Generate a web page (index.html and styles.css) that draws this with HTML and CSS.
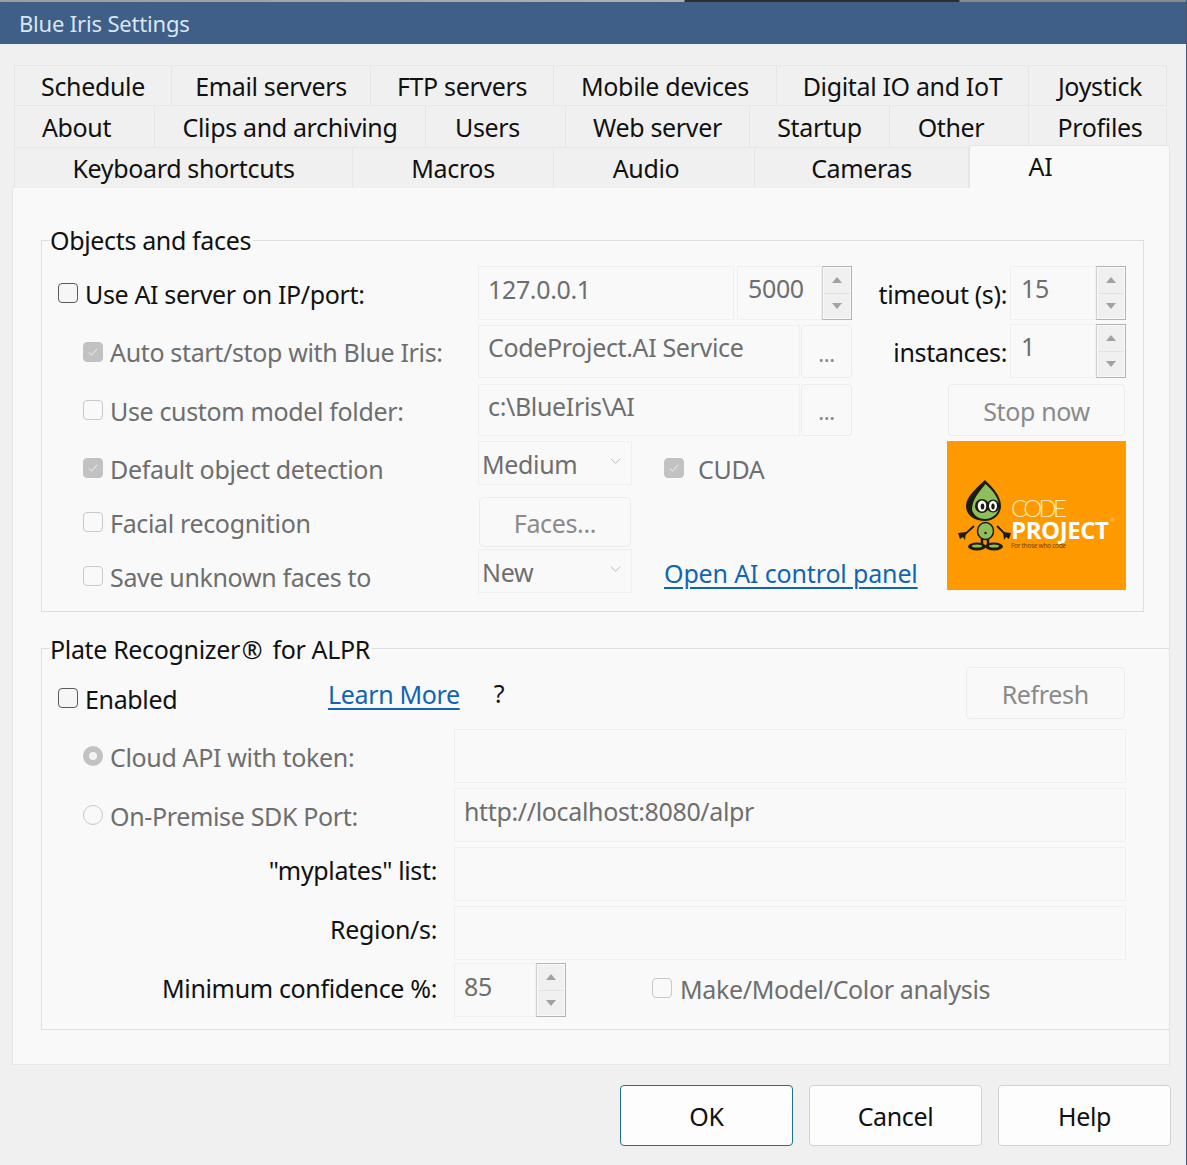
FILE: index.html
```html
<!DOCTYPE html>
<html lang="en">
<head>
<meta charset="utf-8">
<title>Blue Iris Settings</title>
<link rel="stylesheet" href="styles.css">
</head>
<body>
<div class="window">
  <div class="topedge"></div>
  <div class="titlebar">Blue Iris Settings</div>
  <div class="tabs">
    <div class="tabrow tr1">
      <div class="tab">Schedule</div><div class="tab">Email servers</div><div class="tab">FTP servers</div><div class="tab">Mobile devices</div><div class="tab">Digital IO and IoT</div><div class="tab nudge-r">Joystick</div>
    </div>
    <div class="tabrow tr2">
      <div class="tab nudge-l">About</div><div class="tab">Clips and archiving</div><div class="tab nudge-l">Users</div><div class="tab">Web server</div><div class="tab">Startup</div><div class="tab nudge-l">Other</div><div class="tab nudge-r">Profiles</div>
    </div>
    <div class="tabrow tr3">
      <div class="tab">Keyboard shortcuts</div><div class="tab">Macros</div><div class="tab nudge-l">Audio</div><div class="tab">Cameras</div><div class="tab active">AI</div>
    </div>
  </div>
  <div class="panel">
    <section class="group g1">
      <div class="legend">Objects and faces</div>
      <div class="row r1">
        <label class="lab w420"><span class="cb on"></span><span class="txt">Use AI server on IP/port:</span></label>
        <div class="input w256"><span>127.0.0.1</span></div>
        <div class="spin w115 ml3">
          <div class="input grow"><span>5000</span></div>
          <div class="arrows"><span class="up"><i></i></span><span class="down"><i></i></span></div>
        </div>
        <div class="rlabel w158">timeout (s):</div>
        <div class="spin w116">
          <div class="input grow"><span>15</span></div>
          <div class="arrows"><span class="up"><i></i></span><span class="down"><i></i></span></div>
        </div>
      </div>
      <div class="row r2">
        <label class="lab w420 sub dis"><span class="cb checked"><svg viewBox="0 0 20 20"><path d="M5.500 10.500l3 3 6-7"/></svg></span><span class="txt">Auto start/stop with Blue Iris:</span></label>
        <div class="input w322"><span>CodeProject.AI Service</span></div>
        <div class="btn dots w51">...</div>
        <div class="rlabel w158">instances:</div>
        <div class="spin w116">
          <div class="input grow"><span>1</span></div>
          <div class="arrows"><span class="up"><i></i></span><span class="down"><i></i></span></div>
        </div>
      </div>
      <div class="row r3">
        <label class="lab w420 sub dis"><span class="cb"></span><span class="txt">Use custom model folder:</span></label>
        <div class="input w322"><span>c:\BlueIris\AI</span></div>
        <div class="btn dots w51">...</div>
        <div class="btn stop">Stop now</div>
      </div>
      <div class="lower">
        <div class="lowercol">
          <div class="row r4">
            <label class="lab w420 sub dis nudge"><span class="cb checked"><svg viewBox="0 0 20 20"><path d="M5.500 10.500l3 3 6-7"/></svg></span><span class="txt">Default object detection</span></label>
            <div class="select"><span>Medium</span><svg viewBox="0 0 12 8"><path d="M1 1.500l5 5 5-5"/></svg></div>
            <label class="lab dis cuda nudge"><span class="cb checked"><svg viewBox="0 0 20 20"><path d="M5.500 10.500l3 3 6-7"/></svg></span><span class="txt">CUDA</span></label>
          </div>
          <div class="row r5">
            <label class="lab w420 sub dis"><span class="cb"></span><span class="txt">Facial recognition</span></label>
            <div class="btn faces">Faces...</div>
          </div>
          <div class="row r6">
            <label class="lab w420 sub dis nudge"><span class="cb"></span><span class="txt">Save unknown faces to</span></label>
            <div class="select"><span>New</span><svg viewBox="0 0 12 8"><path d="M1 1.500l5 5 5-5"/></svg></div>
            <a class="link openai">Open AI control panel</a>
          </div>
        </div>
        <svg class="logo" viewBox="0 0 179 149" role="img" aria-label="Code Project logo">
          <rect width="179" height="149" fill="#ff9900"/>
          <path d="M27 85L16 95M50 85L60 95" stroke="#1c1c10" stroke-width="1.800" fill="none"/>
          <path d="M11 92l8-1-1 8-2-3-3 2-1-3zM64 92l-8-1 1 8 2-3 3 2 1-3z" fill="#1c1c10"/>
          <path d="M35 96v9M41 96v9" stroke="#1c1c10" stroke-width="2.500"/>
          <ellipse cx="30" cy="105.500" rx="9" ry="4" fill="#1c1c10"/>
          <ellipse cx="47" cy="105.500" rx="9" ry="4" fill="#1c1c10"/>
          <ellipse cx="30" cy="105" rx="5" ry="1.500" fill="#8dbf5c"/>
          <ellipse cx="47" cy="105" rx="5" ry="1.500" fill="#8dbf5c"/>
          <ellipse cx="38.500" cy="90" rx="8" ry="8.500" fill="#8dbf5c" stroke="#1c1c10" stroke-width="1.500"/>
          <circle cx="38.500" cy="92" r="1.200" fill="#1c1c10"/>
          <path d="M38 39C31 46 19 55 19 65C19 74 27 80 38 80C47 80 54 73 54 65C54 54 44 45 38 39Z" fill="#1c1c10"/>
          <path d="M38.500 43C44 48 52 56 52 65C52 73 45 78 38 78C32 78 27 75 25 69C25 58 33 50 38.500 43Z" fill="#8dbf5c"/>
          <circle cx="35" cy="65" r="7" fill="#1c1c10"/>
          <circle cx="46" cy="65" r="6.500" fill="#1c1c10"/>
          <ellipse cx="35" cy="65" rx="4.300" ry="5.500" fill="#fff"/>
          <ellipse cx="46" cy="65" rx="4" ry="5.200" fill="#fff"/>
          <ellipse cx="35.500" cy="65.500" rx="1.800" ry="3" fill="#1c1c10"/>
          <ellipse cx="46" cy="65.500" rx="1.700" ry="2.900" fill="#1c1c10"/>
          <text class="lg-code" x="64" y="76" textLength="56">CODE</text>
          <text class="lg-project" x="64" y="98" textLength="98">PROJECT</text>
          <text class="lg-reg" x="163" y="81">®</text>
          <text class="lg-tag" x="64" y="107" textLength="55">For those who code</text>
        </svg>
      </div>
    </section>
    <section class="group g2">
      <div class="legend">Plate Recognizer<span class="reg">®</span> for ALPR</div>
      <div class="row r7">
        <label class="lab w270 nudge"><span class="cb on"></span><span class="txt">Enabled</span></label>
        <a class="link learn">Learn More</a>
        <span class="question">?</span>
        <div class="btn refresh">Refresh</div>
      </div>
      <div class="row rin first">
        <label class="lab w396 sub dis"><span class="rb checked"></span><span class="txt">Cloud API with token:</span></label>
        <div class="input w672"></div>
      </div>
      <div class="row rin">
        <label class="lab w396 sub dis"><span class="rb"></span><span class="txt">On-Premise SDK Port:</span></label>
        <div class="input w672"><span>http://localhost:8080/alpr</span></div>
      </div>
      <div class="row rin">
        <div class="rlabel w396 pr17">"myplates" list:</div>
        <div class="input w672"></div>
      </div>
      <div class="row rin">
        <div class="rlabel w396 pr17">Region/s:</div>
        <div class="input w672"></div>
      </div>
      <div class="row rin last">
        <div class="rlabel w396 pr17">Minimum confidence %:</div>
        <div class="spin w112">
          <div class="input grow"><span>85</span></div>
          <div class="arrows"><span class="up"><i></i></span><span class="down"><i></i></span></div>
        </div>
        <label class="lab dis make"><span class="cb"></span><span class="txt">Make/Model/Color analysis</span></label>
      </div>
    </section>
  </div>
  <div class="footer">
    <div class="okbtn primary">OK</div>
    <div class="okbtn">Cancel</div>
    <div class="okbtn">Help</div>
  </div>
</div>
</body>
</html>
```
FILE: styles.css
```css
* { box-sizing: border-box; }
html, body { margin: 0; padding: 0; }
body {
  width: 1187px;
  height: 1165px;
  overflow: hidden;
  background: #f0f0f0;
  font-family: "Noto Sans", "Open Sans", sans-serif;
  font-size: 25px;
  letter-spacing: -0.35px;
  color: #111;
}
.window {
  width: 1187px;
  height: 1165px;
  border-right: 1px solid #44597a;
  background: #f0f0f0;
}
.topedge {
  height: 2px;
  background: linear-gradient(90deg, #9c9c9c 0, #b0b0b0 684px, #2e2e2e 685px, #2e2e2e 959px, #8a8a8a 960px, #8a8a8a 100%);
}
.titlebar {
  height: 42px;
  background: #3f5f89;
  color: #dbe6f2;
  font-size: 22px;
  letter-spacing: -0.18px;
  line-height: 42px;
  padding-left: 19px;
}
.tabs { margin: 21px 0 0 14px; }
.tabrow { display: grid; }
.tr1 { grid-template-columns: 158px 199px 183px 223px 252px 138px; height: 40px; }
.tr2 { grid-template-columns: 141px 271px 140px 184px 140px 139px 138px; height: 42px; }
.tr3 { grid-template-columns: 339px 201px 201px 214px 201px; height: 40px; }
.tab {
  background: #f0f0f0;
  border: 1px solid #e6e6e6;
  border-left: 0;
  border-bottom: 0;
  display: flex;
  align-items: center;
  justify-content: center;
  padding-top: 1px;
}
.tr3 .tab { padding-top: 0; padding-bottom: 1px; }
.tab:first-child { border-left: 1px solid #e6e6e6; }
.tab.nudge-l { padding-right: 16px; }
.tab.nudge-r { padding-left: 5px; }
.tr3 .tab.active {
  background: #f9f9f9;
  margin-top: -2px;
  height: 43px;
  position: relative;
  z-index: 1;
  border-left: 1px solid #e6e6e6;
  padding-bottom: 3px;
  padding-right: 58px;
}
.panel {
  margin-left: 12px;
  width: 1158px;
  height: 878px;
  background: #f9f9f9;
  border: 1px solid #e6e6e6;
  padding: 52px 0 0 28px;
}
.group { border: 1px solid #dedede; }
.g1 { width: 1103px; height: 372px; }
.g2 { width: 1128px; height: 382px; margin-top: 36px; border-right: 0; }
.legend {
  background: #f9f9f9;
  width: max-content;
  margin: -16px 0 0 8px;
  padding: 0 2px 0 0;
  height: 30px;
  line-height: 30px;
}
.g2 .legend { line-height: 32px; }
.reg { margin: 0 4px 0 2px; }
.row { display: flex; align-items: center; padding-left: 16px; }
.r1 { height: 54px; margin-top: 11px; }
.r2 { height: 53px; margin-top: 5px; }
.r3 { height: 52px; margin-top: 6px; }
.r4 { height: 44px; }
.r5 { height: 50px; margin-top: 12px; }
.r6 { height: 44px; margin-top: 2px; }
.r7 { height: 52px; margin-top: 4px; }
.rin { height: 54px; margin-top: 5px; }
.rin.first { margin-top: 10px; }
.rin.last { margin-top: 3px; }
.lower { display: flex; margin-top: 5px; }
.lowercol { width: 905px; }
.logo { width: 179px; height: 149px; display: block; }
.lg-code { font-family: Lato, sans-serif; font-weight: 300; font-size: 24px; fill: #ffe9bd; letter-spacing: 0; }
.lg-project { font-family: "Open Sans", sans-serif; font-weight: 700; font-size: 24px; fill: #fff; letter-spacing: 0; }
.lg-reg { font-size: 6px; fill: #ffd48a; letter-spacing: 0; }
.lg-tag { font-family: "Noto Sans", sans-serif; font-size: 6.500px; fill: #6b4500; letter-spacing: 0; }

.lab { display: flex; align-items: center; flex: none; }
.lab .txt { white-space: nowrap; padding-top: 2px; }
.r2 .lab .txt { padding-top: 0; }
.sub { padding-left: 25px; }
.dis { color: #6e6e6e; }
.nudge { padding-top: 10px; }
.w420 { width: 420px; }
.w396 { width: 396px; }
.w270 { width: 270px; }
.w256 { width: 256px; }
.w322 { width: 322px; }
.w672 { width: 672px; }
.w115 { width: 115px; }
.w116 { width: 116px; }
.w112 { width: 112px; }
.w51 { width: 51px; margin-left: 1px; }
.w158 { width: 158px; }
.ml3 { margin-left: 3px; }
.cb, .rb {
  width: 20px;
  height: 20px;
  flex: none;
  margin-right: 7px;
  border: 1px solid #c9c9c9;
  border-radius: 4px;
  background: #f9f9f9;
  display: block;
}
.cb.on { border-color: #5a5a5a; background: #f6f6f6; }
.cb.checked { background: #c2c2c2; border-color: #c2c2c2; }
.cb svg { display: block; width: 18px; height: 18px; fill: none; stroke: #f4f4f4; stroke-width: 1; }
.rb { border-radius: 50%; }
.rb.checked { border: 6px solid #c2c2c2; background: #f4f4f4; }
.rlabel { text-align: right; padding-right: 3px; white-space: nowrap; flex: none; color: #111; }
.r1 .rlabel { padding-top: 2px; }
.rlabel.pr17 { padding-right: 17px; margin-bottom: 8px; }
.rin.last .rlabel.pr17 { margin-bottom: 4px; }
.input {
  height: 54px;
  background: #f9f9f9;
  border: 1px solid #efefef;
  color: #6e6e6e;
  display: flex;
  align-items: center;
  padding: 0 10px 8px 9px;
  flex: none;
  white-space: nowrap;
}
.r2 .input { height: 100%; padding-bottom: 10px; }
.r3 .input { height: 100%; padding-bottom: 9px; }
.spin { display: flex; height: 54px; flex: none; }
.r2 .spin { align-self: flex-start; margin-top: -1px; }
.spin .grow { flex: 1; min-width: 0; height: 54px; padding-bottom: 10px; padding-left: 10px; }
.rin .spin .grow { padding-left: 9px; padding-bottom: 8px; }
.arrows {
  width: 30px;
  flex: none;
  height: 54px;
  display: flex;
  flex-direction: column;
  border: 1px solid #b4b4b4;
  border-left-color: #d2d2d2;
  padding: 1px;
  background: #f9f9f9;
}
.arrows span {
  flex: 1;
  display: flex;
  align-items: center;
  justify-content: center;
  background: #f0f0f0;
}
.arrows .up { border-bottom: 1px solid #e2e2e2; }
.arrows i { display: block; width: 0; height: 0; border-left: 5px solid transparent; border-right: 5px solid transparent; }
.up i { border-bottom: 6px solid #a2a2a2; }
.down i { border-top: 6px solid #a2a2a2; }
.btn {
  background: #f9f9f9;
  border: 1px solid #ececec;
  border-radius: 4px;
  color: #8a8a8a;
  display: flex;
  align-items: center;
  justify-content: center;
  flex: none;
  height: 100%;
  white-space: nowrap;
  padding-top: 2px;
}
.dots { font-size: 22px; align-items: flex-end; padding-top: 0; padding-bottom: 9px; }
.stop { width: 177px; margin-left: 96px; }
.faces { width: 152px; margin-left: 1px; }
.refresh { width: 159px; margin-left: 460px; }
.select {
  width: 154px;
  height: 44px;
  background: #f9f9f9;
  border: 1px solid #efefef;
  color: #6e6e6e;
  display: flex;
  align-items: center;
  justify-content: space-between;
  padding: 2px 10px 0 3px;
  flex: none;
}
.select svg { width: 11px; height: 8px; fill: none; stroke: #b2b2b2; stroke-width: 1; margin-bottom: 6px; }
.cuda { margin-left: 32px; }
.cuda .cb { margin-right: 14px; }
.link { color: #0f65b2; text-decoration: underline; text-underline-offset: 4px; text-decoration-thickness: 2px; white-space: nowrap; }
.learn { padding-top: 2px; }
.openai { margin-left: 32px; padding-top: 4px; letter-spacing: -0.15px; }
.question { margin-left: 34px; width: 12px; }
.make { margin-left: 86px; margin-bottom: 5px; }
.make .cb { margin-right: 8px; }
.footer { display: flex; gap: 16px; justify-content: flex-end; padding-right: 15px; margin-top: 20px; }
.okbtn {
  width: 173px;
  height: 61px;
  background: #fdfdfd;
  border: 1px solid #d2d2d2;
  border-radius: 4px;
  display: flex;
  align-items: center;
  justify-content: center;
}
.okbtn.primary { border-color: #1a6f99; }
```
